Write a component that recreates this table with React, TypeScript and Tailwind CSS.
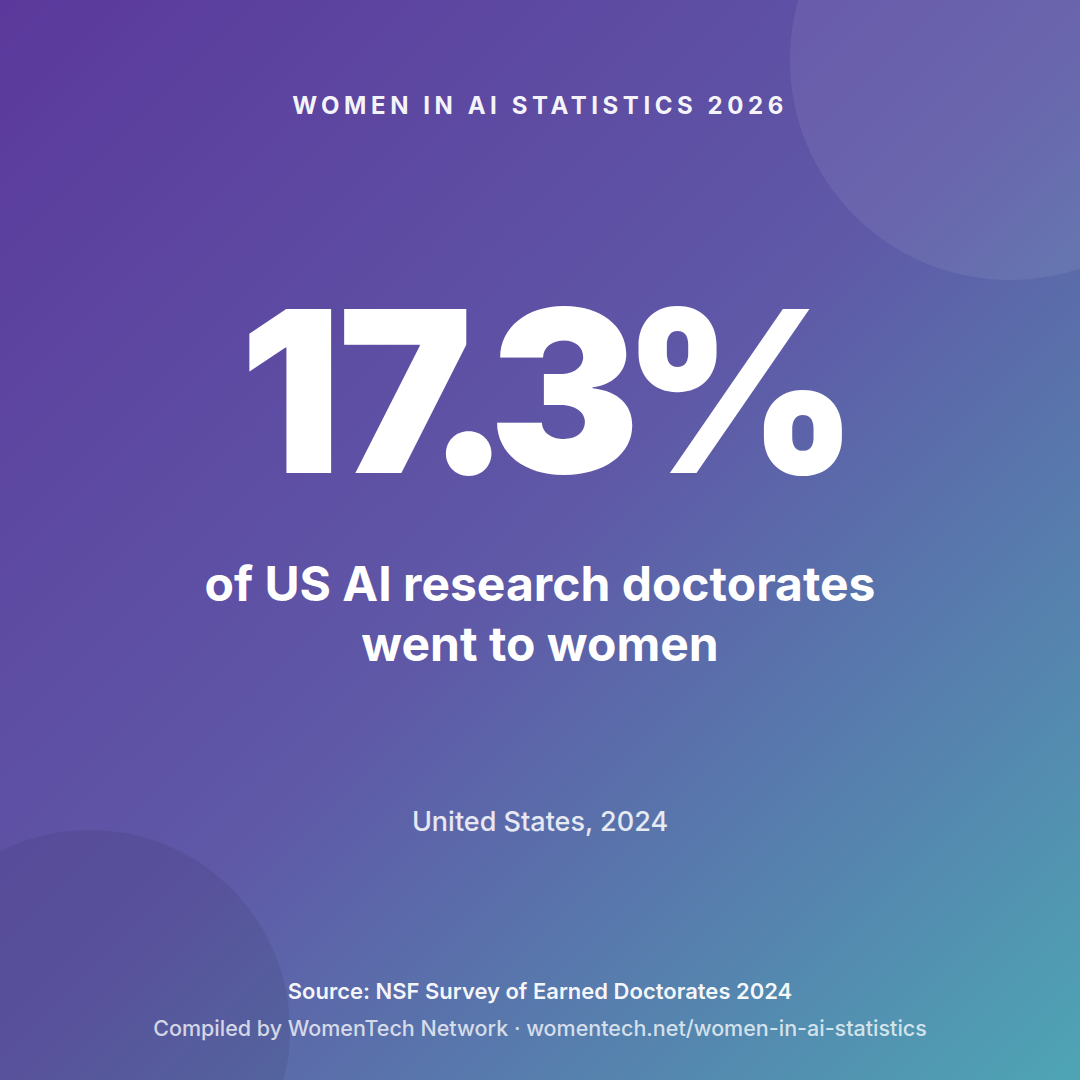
const App = () => (
  <div
    className="relative w-[1080px] h-[1080px] overflow-hidden bg-[linear-gradient(135deg,#5b399c_0%,#5f58a7_50%,#4ea5b4_100%)] text-white flex flex-col items-center"
    style={{ fontFamily: "Inter, 'Noto Sans', sans-serif" }}
  >
    {/* background circles */}
    <div className="absolute w-[440px] h-[440px] rounded-full bg-white/[0.07] left-[790px] top-[-160px]" />
    <div className="absolute w-[400px] h-[400px] rounded-full bg-black/[0.07] left-[-110px] top-[830px]" />

    <p className="relative mt-[88px] text-[24px] font-bold tracking-[0.19em] text-white/95">
      WOMEN IN AI STATISTICS 2026
    </p>

    <p className="relative mt-[154px] text-[226px] leading-none font-black tracking-[-0.078em]">
      <span className="mr-[14px]">1</span>7.3%
    </p>

    <p className="relative mt-[50px] text-[48px] leading-[60px] font-bold text-center">
      of US AI research doctorates
      <br />
      went to women
    </p>

    <p className="relative mt-[128px] text-[27px] font-medium text-white/85">
      United States, 2024
    </p>

    <div className="relative mt-auto mb-[36px] flex flex-col items-center gap-[4px]">
      <p className="text-[22px] font-semibold text-white/95">
        Source: NSF Survey of Earned Doctorates 2024
      </p>
      <p className="text-[21.5px] font-medium text-white/75">
        Compiled by WomenTech Network · womentech.net/women-in-ai-statistics
      </p>
    </div>
  </div>
);

export default App;
